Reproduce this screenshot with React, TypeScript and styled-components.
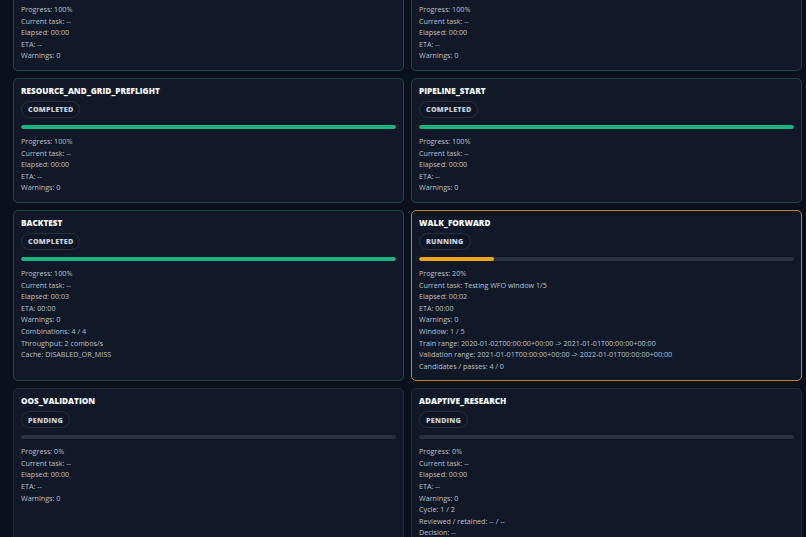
import React from "react"
import styled, { createGlobalStyle } from "styled-components"

type Status = "completed" | "running" | "pending"

interface Stage {
  name: string
  status: Status
  progress: number
  lines: string[]
}

const baseLines = (progress: number, task = "--", elapsed = "00:00", eta = "--") => [
  `Progress: ${progress}%`,
  `Current task: ${task}`,
  `Elapsed: ${elapsed}`,
  `ETA: ${eta}`,
  "Warnings: 0",
]

const stages: Stage[] = [
  { name: "DATA_LOAD", status: "completed", progress: 100, lines: baseLines(100) },
  { name: "CONFIG_VALIDATION", status: "completed", progress: 100, lines: baseLines(100) },
  { name: "RESOURCE_AND_GRID_PREFLIGHT", status: "completed", progress: 100, lines: baseLines(100) },
  { name: "PIPELINE_START", status: "completed", progress: 100, lines: baseLines(100) },
  {
    name: "BACKTEST",
    status: "completed",
    progress: 100,
    lines: [
      ...baseLines(100, "--", "00:03", "00:00"),
      "Combinations: 4 / 4",
      "Throughput: 2 combos/s",
      "Cache: DISABLED_OR_MISS",
    ],
  },
  {
    name: "WALK_FORWARD",
    status: "running",
    progress: 20,
    lines: [
      ...baseLines(20, "Testing WFO window 1/5", "00:02", "00:00"),
      "Window: 1 / 5",
      "Train range: 2020-01-02T00:00:00+00:00 -> 2021-01-01T00:00:00+00:00",
      "Validation range: 2021-01-01T00:00:00+00:00 -> 2022-01-01T00:00:00+00:00",
      "Candidates / passes: 4 / 0",
    ],
  },
  { name: "OOS_VALIDATION", status: "pending", progress: 0, lines: baseLines(0) },
  {
    name: "ADAPTIVE_RESEARCH",
    status: "pending",
    progress: 0,
    lines: [
      ...baseLines(0),
      "Cycle: 1 / 2",
      "Reviewed / retained: -- / --",
      "Decision: --",
    ],
  },
]

const borderFor: Record<Status, string> = {
  completed: "#1c4843",
  running: "#b9852b",
  pending: "#212b3a",
}

const fillFor: Record<Status, string> = {
  completed: "#19b47f",
  running: "#f2a516",
  pending: "#19b47f",
}

const GlobalStyle = createGlobalStyle`
  html, body {
    margin: 0;
    background: #0b111c;
    overflow: hidden;
  }
  body {
    font-family: "Open Sans", "Noto Sans", sans-serif;
  }
`

const Page = styled.div`
  height: 537px;
  overflow: hidden;
  padding: 0 4px 0 13px;
`

const Grid = styled.div`
  display: grid;
  grid-template-columns: 1fr 1fr;
  gap: 7px;
  margin-top: -54px;
`

const Card = styled.section<{ $status: Status }>`
  background: #111827;
  border: 1px solid ${(p) => borderFor[p.$status]};
  border-radius: 5px;
  padding: 6px 7px 8px;
  display: flex;
  flex-direction: column;
`

const Title = styled.h3`
  margin: 0;
  font-size: 8.2px;
  line-height: 12px;
  font-weight: 800;
  color: #f7f9fc;
  letter-spacing: 0;
`

const Badge = styled.span`
  align-self: flex-start;
  margin-top: 4px;
  height: 17px;
  box-sizing: border-box;
  display: inline-flex;
  align-items: center;
  padding: 0 6px;
  border: 1px solid #263143;
  border-radius: 9px;
  background: #0f1624;
  color: #c6cedb;
  font-size: 7.2px;
  font-weight: 800;
  letter-spacing: 0.03em;
`

const Track = styled.div`
  margin-top: 7px;
  height: 4px;
  border-radius: 2px;
  background: #273142;
  overflow: hidden;
`

const Fill = styled.div<{ $status: Status }>`
  height: 100%;
  border-radius: 2px;
  background: ${(p) => fillFor[p.$status]};
`

const Details = styled.div`
  margin-top: 7px;
  display: flex;
  flex-direction: column;
`

const Line = styled.div`
  font-size: 7.2px;
  font-weight: 500;
  line-height: 11.6px;
  color: #b8c1cd;
  white-space: nowrap;
`

const StageCard = ({ stage }: { stage: Stage }) => (
  <Card $status={stage.status}>
    <Title>{stage.name}</Title>
    <Badge>{stage.status.toUpperCase()}</Badge>
    <Track>
      <Fill $status={stage.status} style={{ width: `${stage.progress}%` }} />
    </Track>
    <Details>
      {stage.lines.map((l) => (
        <Line key={l}>{l}</Line>
      ))}
    </Details>
  </Card>
)

export default function App() {
  return (
    <>
      <GlobalStyle />
      <Page>
        <Grid>
          {stages.map((s) => (
            <StageCard key={s.name} stage={s} />
          ))}
        </Grid>
      </Page>
    </>
  )
}
